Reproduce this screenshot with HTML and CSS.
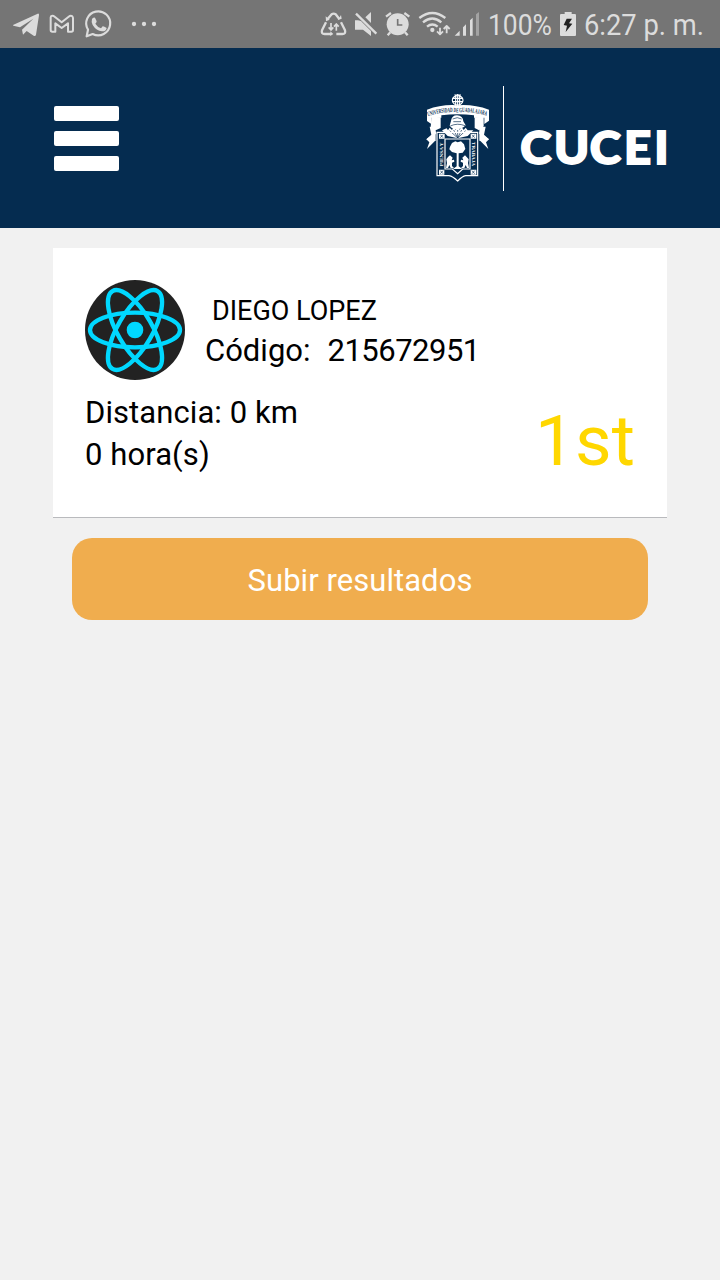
FILE: index.html
```html
<!DOCTYPE html>
<html lang="es">
<head>
<meta charset="utf-8">
<meta name="viewport" content="width=device-width">
<title>CUCEI</title>
<link rel="stylesheet" href="styles.css">
</head>
<body>
<div class="status">
  <div class="status-group">
    <svg class="icon" width="45" height="48" viewBox="0 0 135 144"><path d="M39 75 L113 41 Q118 40 117 46 L108 104 Q106 110 101 107 L80 93 L69 104 L66 89 L100 56 L60 82 L40 77 Z"/></svg>
    <svg class="icon" width="34" height="48" viewBox="135 0 102 144"><path class="line" stroke-width="6" d="M153 49 Q158 45 164 50 L185 67 L206 50 Q212 45 217 49 Q219 51 219 55 L219 90 Q219 95 214 95 L204 95 L204 70 L185 84 L166 70 L166 95 L157 95 Q152 95 152 90 L152 53 Q152 51 153 49 Z"/></svg>
    <svg class="icon" width="41" height="48" viewBox="237 0 123 144"><path class="line" stroke-width="6.5" d="M260 109 L264 89 A36 36 0 1 1 278 102 Z"/><path d="M276 57 Q279 51 285 53 L290 64 Q290 68 286 71 Q293 82 303 85 L308 79 Q311 78 320 84 Q318 95 306 94 Q289 93 278 75 Q273 66 276 57Z"/></svg>
    <svg class="icon" width="45" height="48" viewBox="360 0 135 144"><circle cx="402" cy="72" r="6.5"/><circle cx="432" cy="72" r="6.5"/><circle cx="462" cy="72" r="6.5"/></svg>
  </div>
  <div class="status-group">
    <svg class="icon" width="32" height="48" viewBox="24 0 96 144"><path class="line" stroke-width="7" d="M53 57 L65 43 Q71 39 77 43 L88 57 M48 67 L36 91 Q33 102 44 102 L63 102 M93 67 L105 91 Q108 102 97 102 L79 102"/><path d="M47 49 L59 59 L48 64Z M83 61 L95 56 L93 45Z M61 94 L70 102 L61 108Z"/><path class="line" stroke-width="5" d="M63 69 V90 M56 82 L63 90 L70 82 M79 92 V72 M72 80 L79 72 L86 80"/></svg>
    <svg class="icon" width="30" height="48" viewBox="120 0 90 144"><path d="M135 61 H144 L153 63 L183 93 V108 L159 89 H135Z M166 52 L183 36 V69Z"/><path class="line" stroke-width="7" d="M138 41 L199 101"/></svg>
    <svg class="icon" width="34" height="48" viewBox="210 0 102 144"><circle cx="263" cy="73" r="33"/><path class="line" stroke-width="7" d="M228 50 L243 39 M283 39 L298 50 M241 97 L233 106 M285 97 L293 106"/><path class="cut" d="M263 57 V75 H277"/></svg>
    <svg class="icon" width="38" height="48" viewBox="312 0 114 144"><path class="line" stroke-width="7" d="M328 54 Q367 24 406 54 M339 67 Q367 44 394 67 M351 80 Q367 67 383 80"/><circle cx="367" cy="90" r="6.5"/><path class="line" stroke-width="5.5" d="M390 83 V102 M381 94 L390 103 L399 94 M410 100 V80 M401 87 L410 78 L419 87"/></svg>
    <svg class="icon" width="30" height="48" viewBox="426 0 90 144"><path d="M434 107 L449 92 V107Z M459 82 L468 73 V107 H459Z M480 61 L488 53 V107 H480Z"/><path opacity=".45" d="M498 43 L507 36 V107 H498Z"/></svg>
    <svg class="icon" width="74" height="48" viewBox="482 0 74 48"><text x="488" y="35" font-size="30" textLength="64" lengthAdjust="spacingAndGlyphs">100%</text></svg>
    <svg class="icon" width="24" height="48" viewBox="228 0 72 144"><path d="M243 42 H254 V36 H275 V42 H285 Q288 42 288 46 V105 Q288 108 285 108 H243 Q240 108 240 105 V46 Q240 42 243 42Z"/><path class="bolt" d="M260 56 H276 L267 70 L277 71 L257 96 L261 77 L251 75Z"/></svg>
    <svg class="icon" width="140" height="48" viewBox="580 0 140 48"><text x="584" y="35" font-size="30" textLength="120" lengthAdjust="spacingAndGlyphs">6:27 p. m.</text></svg>
  </div>
</div>

<header class="header">
  <div class="menu"><span class="menu-bar"></span><span class="menu-bar"></span><span class="menu-bar"></span></div>
  <div class="brand">
    <svg class="crest" width="80" height="115" viewBox="0 0 240 345">
      <g class="thin">
        <ellipse cx="128" cy="61" rx="16" ry="14"/><path d="M112 55 H144 M112 65 H144 M128 42 V78 M122 46 V77 M134 46 V77 M118 45 H138"/>
      </g>
      <path d="M36 89 Q82 72 128 76 Q174 72 222 89 V122 L208 132 V113 H50 V133 L36 123 Z"/>
      <path d="M50 110 L77 112 V144 L62 151 L47 140Z M179 112 L206 110 V139 L192 151 L179 144Z"/>
      <path d="M58 146 L64 160 L50 174 L62 181 L36 207 L43 187 L34 178 L51 166Z M198 146 L192 160 L206 174 L194 181 L220 207 L213 187 L222 178 L205 166Z"/>
      <path d="M44 140 H62 V182 H46 L34 178 L49 164Z M212 140 H193 V182 H210 L222 178 L207 164Z"/>
      <path id="ribbon" class="none" d="M39 109 Q84 93 128 97 Q172 93 219 109"/>
      <text class="motto" font-size="19"><textPath href="#ribbon" textLength="178" lengthAdjust="spacingAndGlyphs">UNIVERSIDAD DE GUADALAJARA</textPath></text>
      <path class="blue" d="M79 106 Q128 99 177 106 V151 H79Z"/>
      <path d="M81 151 L95 145 L99 151 L104 143 L111 150 L116 141 L122 149 L128 140 L134 149 L140 141 L146 150 L152 143 L158 151 L175 151 L158 168 L128 175 L98 168Z"/>
      <path d="M108 123 Q110 106 126 106 Q144 107 145 124 L152 136 Q139 149 127 147 Q112 149 104 137Z"/>
      <path class="bluethin" d="M113 117 Q127 109 140 117 M106 138 Q127 128 150 137 M115 125 H138 M128 174 L104 152 M128 174 L116 150 M128 174 V150 M128 174 L140 150 M128 174 L152 152"/>
      <path class="thin" d="M66 157 H188 V287 H152 Q142 289 128 303 Q113 289 102 287 H66Z"/>
      <path class="thin" d="M90 177 H165 V267 H143 L128 281 L112 267 H90Z"/>
      <path d="M72 161 H89 V176 H72Z M167 161 H184 V176 H167Z M72 269 H88 V284 H72Z M167 269 H184 V284 H167Z"/>
      <path class="bluethin" d="M76 164 L84 173 M84 164 L76 173 M171 164 L179 173 M179 164 L171 173 M76 272 L84 281 M84 272 L76 281 M171 272 L179 281 M179 272 L171 281"/>
      <path d="M105 200 L111 189 L121 184 L128 187 L138 184 L147 193 L151 207 L143 218 L131 220 V259 L142 267 H114 L125 259 V220 L111 216 L103 208Z"/>
      <path d="M99 231 L105 226 L113 233 L110 241 L117 239 L118 245 L111 248 V258 L117 264 H107 L103 255 L99 264 H93 L96 249 L94 238Z M155 231 L150 226 L142 233 L145 241 L138 239 L137 245 L144 248 V258 L138 264 H148 L152 255 L156 264 H162 L159 249 L161 238Z"/>
      <text class="side" font-size="15" transform="translate(83 259) rotate(-90)" textLength="72" lengthAdjust="spacingAndGlyphs">PIENSA Y</text>
      <text class="side" font-size="15" transform="translate(172 186) rotate(90)" textLength="72" lengthAdjust="spacingAndGlyphs">TRABAJA</text>
    </svg>
    <span class="divider"></span>
    <svg class="wordmark" width="150" height="64" viewBox="519 115 150 64"><text transform="translate(520 164.3) scale(1.04 1)" x="0.3 32.8 67 99.9 129" y="0" font-size="45.5">CUCEI</text></svg>
  </div>
</header>

<main class="content">
  <section class="card">
    <div class="person">
      <svg class="avatar" width="100" height="100" viewBox="30 30 300 300"><circle cx="180" cy="180" r="150" fill="#222"/><g fill="none" stroke="#00d8ff" stroke-width="13"><ellipse cx="180" cy="180" rx="135" ry="52"/><ellipse cx="180" cy="180" rx="135" ry="52" transform="rotate(60 180 180)"/><ellipse cx="180" cy="180" rx="135" ry="52" transform="rotate(120 180 180)"/></g><circle cx="180" cy="180" r="25" fill="#00d8ff"/></svg>
      <div class="person-text">
        <div class="name">DIEGO LOPEZ</div>
        <div class="code"><span>Código:</span><span class="code-number">215672951</span></div>
      </div>
    </div>
    <div class="stats">
      <div class="stats-text"><div>Distancia: 0 km</div><div>0 hora(s)</div></div>
      <div class="place">1st</div>
    </div>
  </section>
  <button class="upload">Subir resultados</button>
</main>
</body>
</html>
```

FILE: styles.css
```css
* { box-sizing: border-box; }
body { margin: 0; min-height: 1280px; background: #f1f1f1; color: #000; font-family: Roboto, sans-serif; }
svg { display: block; flex: none; overflow: visible; }

.status { display: flex; justify-content: space-between; height: 48px; background: #757575; }
.status-group { display: flex; }
.icon { fill: #dcdcdc; }
.icon .line { fill: none; stroke: #dcdcdc; stroke-linejoin: round; }
.icon .cut { fill: none; stroke: #757575; stroke-width: 5; }
.icon .bolt { fill: #222; }

.header { display: flex; justify-content: space-between; height: 180px; padding: 0 51px 0 54px; background: #052c50; }
.menu { display: flex; flex-direction: column; gap: 10px; padding-top: 58px; }
.menu-bar { width: 65px; height: 15px; border-radius: 2px; background: #fff; }
.brand { display: flex; }
.crest { margin-top: 32px; fill: #fff; }
.crest .thin { fill: none; stroke: #fff; stroke-width: 3.5; }
.crest .none { fill: none; }
.crest .blue { fill: #052c50; }
.crest .bluethin { fill: none; stroke: #052c50; stroke-width: 2; }
.crest text { font-family: "Liberation Serif", serif; font-weight: 700; }
.crest .motto { fill: #052c50; }
.divider { width: 1px; height: 105px; margin: 38px 15px 0 8px; background: #fff; }
.wordmark { margin-top: 67px; fill: #fff; stroke: #fff; stroke-width: 1.8; font-family: Lato, sans-serif; font-weight: 900; }

.content { padding: 20px 53px 0; }
.card { height: 270px; padding: 32px; background: #fff; border-bottom: 1px solid #b9babd; }
.person { display: flex; gap: 20px; }
.person-text { padding-top: 11px; }
.name { padding-left: 7px; font-size: 27px; line-height: 40px; }
.code { display: flex; gap: 17px; font-size: 31px; line-height: 40px; white-space: nowrap; }
.code-number { letter-spacing: -0.5px; }
.stats { display: flex; justify-content: space-between; padding-top: 12px; font-size: 31px; line-height: 42px; letter-spacing: 0.08px; }
.place { padding-top: 7px; font-size: 71px; line-height: 84px; color: #ffd700; }
.upload { display: block; width: 576px; height: 82px; margin: 20px auto 0; padding: 2px 0 0; border: 0; border-radius: 20px; background: #f0ad4e; color: #fff; font: 31px Roboto, sans-serif; letter-spacing: 0.05px; }
```
